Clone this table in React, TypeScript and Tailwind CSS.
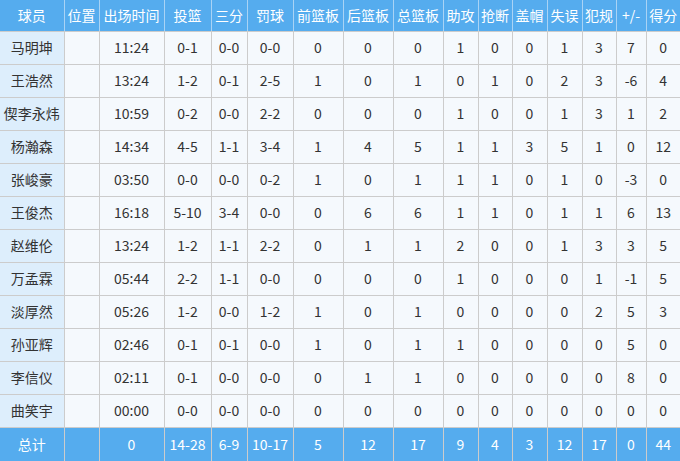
const headers = [
  "球员", "位置", "出场时间", "投篮", "三分", "罚球", "前篮板", "后篮板", "总篮板",
  "助攻", "抢断", "盖帽", "失误", "犯规", "+/-", "得分",
];

const widths = [64, 35, 65, 47, 36, 46, 50, 50, 50, 35, 34, 35, 35, 34, 30, 34];

const rows: (string | number)[][] = [
  ["马明坤", "", "11:24", "0-1", "0-0", "0-0", 0, 0, 0, 1, 0, 0, 1, 3, 7, 0],
  ["王浩然", "", "13:24", "1-2", "0-1", "2-5", 1, 0, 1, 0, 1, 0, 2, 3, -6, 4],
  ["偰李永炜", "", "10:59", "0-2", "0-0", "2-2", 0, 0, 0, 1, 0, 0, 1, 3, 1, 2],
  ["杨瀚森", "", "14:34", "4-5", "1-1", "3-4", 1, 4, 5, 1, 1, 3, 5, 1, 0, 12],
  ["张峻豪", "", "03:50", "0-0", "0-0", "0-2", 1, 0, 1, 1, 1, 0, 1, 0, -3, 0],
  ["王俊杰", "", "16:18", "5-10", "3-4", "0-0", 0, 6, 6, 1, 1, 0, 1, 1, 6, 13],
  ["赵维伦", "", "13:24", "1-2", "1-1", "2-2", 0, 1, 1, 2, 0, 0, 1, 3, 3, 5],
  ["万孟霖", "", "05:44", "2-2", "1-1", "0-0", 0, 0, 0, 1, 0, 0, 0, 1, -1, 5],
  ["淡厚然", "", "05:26", "1-2", "0-0", "1-2", 1, 0, 1, 0, 0, 0, 0, 2, 5, 3],
  ["孙亚辉", "", "02:46", "0-1", "0-1", "0-0", 1, 0, 1, 1, 0, 0, 0, 0, 5, 0],
  ["李信仪", "", "02:11", "0-1", "0-0", "0-0", 0, 1, 1, 0, 0, 0, 0, 0, 8, 0],
  ["曲笑宇", "", "00:00", "0-0", "0-0", "0-0", 0, 0, 0, 0, 0, 0, 0, 0, 0, 0],
];

const total = ["总计", "", "0", "14-28", "6-9", "10-17", 5, 12, 17, 9, 4, 3, 12, 17, 0, 44];

export default function App() {
  return (
    <div className="w-[680px] h-[461px] overflow-hidden bg-white font-['Noto_Sans_CJK_SC','Microsoft_YaHei',sans-serif] text-[14px]">
      <table className="w-[680px] table-fixed border-collapse text-center">
        <colgroup>
          {widths.map((w, i) => (
            <col key={i} style={{ width: w }} />
          ))}
        </colgroup>
        <thead>
          <tr className="h-[31px] bg-[#55acee] text-white">
            {headers.map((h, i) => (
              <th
                key={i}
                className="p-0 font-normal border-r border-b border-r-[#a9d3f5] border-b-[#cccccc] last:border-r-0 whitespace-nowrap"
              >
                {h}
              </th>
            ))}
          </tr>
        </thead>
        <tbody>
          {rows.map((r, ri) => (
            <tr key={ri} className="h-[33px] text-[#333333]">
              {r.map((c, ci) => (
                <td
                  key={ci}
                  className={
                    "p-0 border-r border-b border-[#cccccc] last:border-r-0 whitespace-nowrap " +
                    (ci === 0 ? "bg-[#ddeefc]" : "bg-[#f5f9fd]")
                  }
                >
                  {c}
                </td>
              ))}
            </tr>
          ))}
          <tr className="h-[34px] bg-[#55acee] text-white">
            {total.map((c, ci) => (
              <td
                key={ci}
                className="p-0 border-r border-[#cccccc] last:border-r-0 whitespace-nowrap"
              >
                {c}
              </td>
            ))}
          </tr>
        </tbody>
      </table>
    </div>
  );
}
